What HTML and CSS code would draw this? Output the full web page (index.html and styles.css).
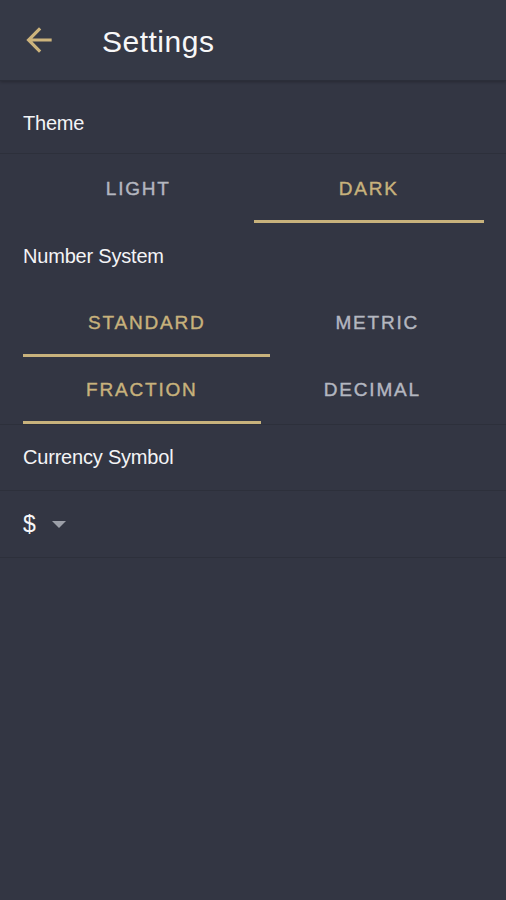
FILE: index.html
```html
<!DOCTYPE html>
<html>
<head>
<meta charset="utf-8">
<link rel="stylesheet" href="styles.css">
</head>
<body>
<div class="app">
  <header class="header">
    <svg class="back" viewBox="0 0 24 24"><path d="M20 11H7.83l5.59-5.59L12 4l-8 8 8 8 1.41-1.41L7.83 13H20v-2z"/></svg>
    <h1 class="title">Settings</h1>
  </header>
  <div class="label-row first bordered">Theme</div>
  <div class="tabs equal">
    <div class="tab">LIGHT</div>
    <div class="tab active">DARK</div>
  </div>
  <div class="label-row">Number System</div>
  <div class="tabs">
    <div class="tab active">STANDARD</div>
    <div class="tab">METRIC</div>
  </div>
  <div class="tabs bordered">
    <div class="tab active">FRACTION</div>
    <div class="tab">DECIMAL</div>
  </div>
  <div class="label-row short bordered">Currency Symbol</div>
  <div class="select-row bordered">
    <span class="symbol">$</span>
    <span class="caret"></span>
  </div>
</div>
</body>
</html>
```
FILE: styles.css
```css
html, body {
  margin: 0;
  padding: 0;
  background: #333643;
}
.app {
  width: 506px;
  min-height: 900px;
  background: #333643;
  font-family: "Liberation Sans", Arial, sans-serif;
  color: #f2f2f4;
  display: flex;
  flex-direction: column;
}
.header {
  height: 81px;
  background: #353946;
  border-bottom: 1px solid #2b2e39;
  box-shadow: 0 1px 3px rgba(0,0,0,0.25);
  display: flex;
  align-items: center;
  box-sizing: border-box;
  padding-left: 20px;
  position: relative;
  z-index: 1;
}
.back {
  width: 38px;
  height: 38px;
  fill: #cdb47c;
  flex: none;
}
.title {
  margin: 0 0 0 44px;
  font-family: "Liberation Sans", Arial, sans-serif;
  font-weight: 400;
  font-size: 30px;
  letter-spacing: 0.5px;
  color: #f7f7f8;
  padding-top: 3px;
}
.bordered {
  border-bottom: 1px solid #2d303b;
}
.label-row {
  height: 67px;
  box-sizing: border-box;
  display: flex;
  align-items: center;
  padding-left: 23px;
  font-size: 20px;
  letter-spacing: -0.2px;
  color: #f4f4f6;
}
.label-row.first {
  height: 73px;
  padding-top: 12px;
  margin-bottom: 2px;
}
.label-row.short {
  height: 66px;
}
.tabs {
  display: flex;
  padding: 0 22px 0 23px;
}
.tab {
  flex: 1 1 auto;
  height: 67px;
  box-sizing: border-box;
  display: flex;
  align-items: center;
  justify-content: center;
  padding-top: 2px;
  font-size: 19px;
  font-weight: 400;
  letter-spacing: 1.8px;
  -webkit-text-stroke: 0.4px currentColor;
  color: #b4b7c0;
  border-bottom: 3px solid transparent;
}
.tabs.equal .tab {
  flex: 1 1 0;
}
.tab.active {
  color: #c8b27c;
  border-bottom-color: #c8b27c;
}
.select-row {
  height: 67px;
  box-sizing: border-box;
  display: flex;
  align-items: center;
  padding-left: 23px;
  gap: 16px;
}
.symbol {
  font-size: 23px;
  color: #f6f6f8;
}
.caret {
  width: 0;
  height: 0;
  border-left: 7px solid transparent;
  border-right: 7px solid transparent;
  border-top: 7px solid #9c9fa8;
  margin-top: 1px;
}
```
